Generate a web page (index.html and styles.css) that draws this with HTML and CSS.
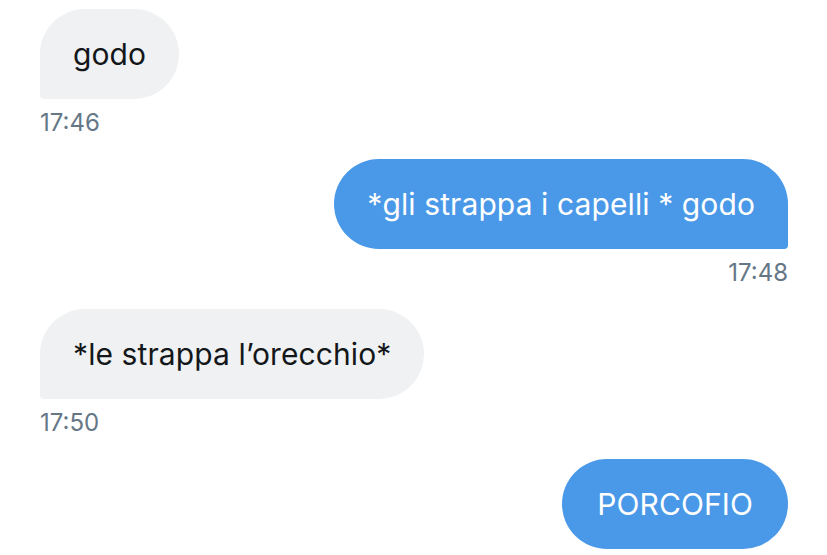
FILE: index.html
```html
<!DOCTYPE html>
<html lang="it">
<head>
<meta charset="utf-8">
<link rel="stylesheet" href="styles.css">
</head>
<body>
<div class="chat">
  <div class="msg in">
    <div class="bubble">godo</div>
    <div class="time">17:46</div>
  </div>
  <div class="msg out">
    <div class="bubble">*gli strappa i capelli * godo</div>
    <div class="time">17:48</div>
  </div>
  <div class="msg in">
    <div class="bubble">*le strappa l’orecchio*</div>
    <div class="time">17:50</div>
  </div>
  <div class="msg out last">
    <div class="bubble">PORCOFIO</div>
  </div>
</div>
</body>
</html>
```
FILE: styles.css
```css
html, body {
  margin: 0;
  padding: 0;
  background: #ffffff;
}
body {
  font-family: Inter, "Noto Sans", sans-serif;
  width: 827px;
  height: 555px;
  overflow: hidden;
}
.chat {
  display: flex;
  flex-direction: column;
  padding: 9px 39px 0 40px;
}
.msg {
  display: flex;
  flex-direction: column;
  height: 150px;
}
.msg.last { height: auto; }
.msg.in { align-items: flex-start; }
.msg.out { align-items: flex-end; }
.bubble {
  height: 90px;
  box-sizing: border-box;
  padding: 0 33px;
  display: flex;
  align-items: center;
  font-size: 30px;
  letter-spacing: 0.1px;
  border-radius: 45px;
}
.last .bubble {
  padding: 0 35px;
}
.in .bubble {
  background: #eff1f3;
  color: #14171a;
  border-bottom-left-radius: 4px;
}
.out .bubble {
  background: #4a98e8;
  color: #ffffff;
  border-bottom-right-radius: 4px;
}
.out.last .bubble {
  border-bottom-right-radius: 45px;
}
.time {
  margin-top: 10px;
  font-size: 24px;
  line-height: 28px;
  color: #657786;
}
```
